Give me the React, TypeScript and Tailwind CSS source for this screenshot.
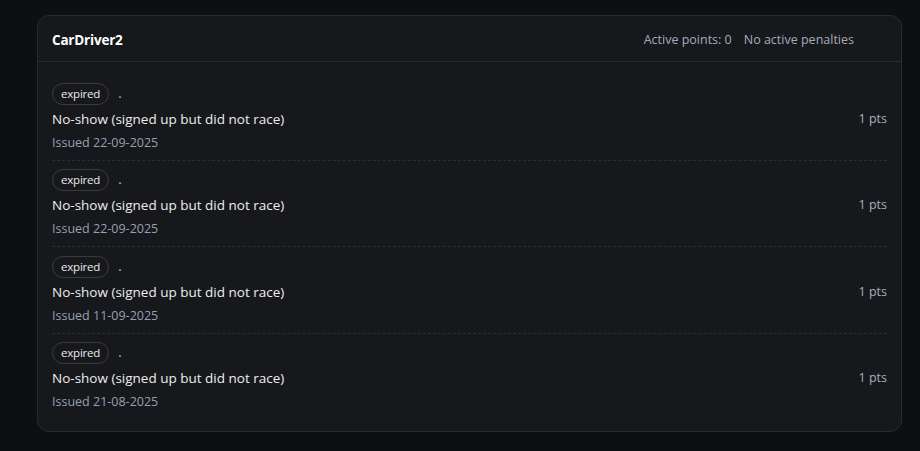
const penalties = [
  { reason: 'No-show (signed up but did not race)', points: 1, issued: '22-09-2025' },
  { reason: 'No-show (signed up but did not race)', points: 1, issued: '22-09-2025' },
  { reason: 'No-show (signed up but did not race)', points: 1, issued: '11-09-2025' },
  { reason: 'No-show (signed up but did not race)', points: 1, issued: '21-08-2025' },
];

function PenaltyRow({ reason, points, issued, last }: { reason: string; points: number; issued: string; last: boolean }) {
  return (
    <div className={`flex items-start justify-between pt-[8.5px] pb-[7px] ${last ? '' : 'border-b border-dashed border-[#2c2d32]'}`}>
      <div>
        <div className="flex items-center gap-[9px]">
          <span className="rounded-full border border-[#3a3b41] px-[8px] h-[22px] flex items-center text-[11.5px] tracking-[-0.2px] text-[#ececec]">
            expired
          </span>
          <span className="text-[13px] text-[#c9ccd2]">.</span>
        </div>
        <p className="mt-[4px] text-[13.5px] leading-[20px] text-[#ededed]">{reason}</p>
        <p className="mt-[4px] text-[12.5px] leading-[20px] text-[#96a0b2]">Issued {issued}</p>
      </div>
      <span className="mt-[26px] text-[12.5px] leading-[20px] text-[#a7aebb]">{points} pts</span>
    </div>
  );
}

export default function App() {
  return (
    <div className="min-h-screen bg-[#0e0f12] pt-[15px] pl-[37px]" style={{ fontFamily: '"Open Sans", "Noto Sans", sans-serif' }}>
      <div className="w-[865px] rounded-[12px] border border-[#2a2b30] bg-[#17181b]">
        <div className="flex items-center justify-between h-[46px] pt-[3px] px-[14px] border-b border-[#2a2b30]">
          <h2 className="text-[13.5px] tracking-[-0.2px] font-bold text-white">CarDriver2</h2>
          <div className="flex gap-[12px] mr-[33px] text-[12.5px] text-[#a3abba]">
            <span>Active points: 0</span>
            <span>No active penalties</span>
          </div>
        </div>
        <div className="px-[14px] pt-[12px] pb-[12px]">
          {penalties.map((p, i) => (
            <PenaltyRow key={i} {...p} last={i === penalties.length - 1} />
          ))}
        </div>
      </div>
    </div>
  );
}
